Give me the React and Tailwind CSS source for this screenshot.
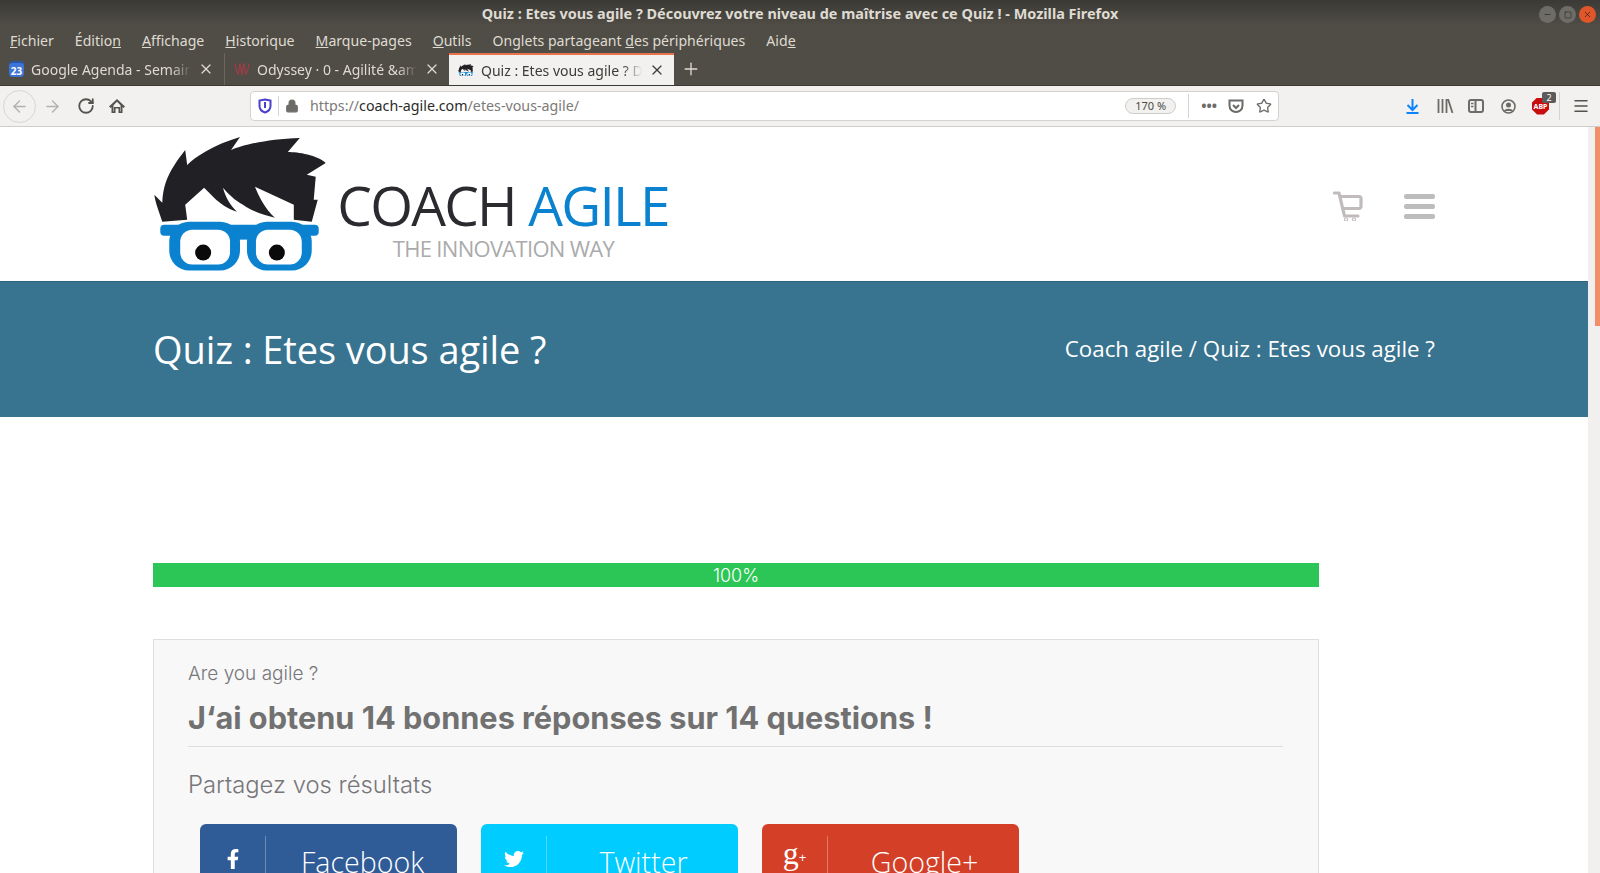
import React from 'react';
import { ArrowLeft, ArrowRight, RotateCw, Lock, Star, Plus, X, Minus, Square, Menu } from 'lucide-react';
import { FaFacebookF, FaTwitter } from 'react-icons/fa';

const menus = [
  ['F', 'ichier'],
  ['', 'Éditio', 'n'],
  ['A', 'ffichage'],
  ['H', 'istorique'],
  ['M', 'arque-pages'],
  ['O', 'utils'],
  ['', 'Onglets partageant ', 'd', 'es périphériques'],
  ['', 'Aid', 'e'],
];

const MenuLabel = ({ parts }) => {
  if (parts[0]) {
    return <span><u>{parts[0]}</u>{parts[1]}</span>;
  }
  return <span>{parts[1]}<u>{parts[2]}</u>{parts[3]}</span>;
};

const CalendarIcon = () => (
  <div className="w-[15px] h-[16px] bg-[#3d74d8] rounded-sm flex items-end justify-center text-white text-[10px] leading-[12px] font-bold shrink-0 border-t-2 border-[#2a56a8]">
    23
  </div>
);

const OdysseyIcon = () => (
  <svg width="16" height="14" viewBox="0 0 16 14" fill="none" stroke="#9c3d46" strokeWidth="1.3" className="shrink-0">
    <path d="M1 2c1 4 1 8 3 10 1-3 1-7 2-10 1 3 1 7 2 10 1-3 1-7 2-10 1 3 1 7 2 10 2-2 2-6 3-10" />
  </svg>
);

const LogoMark = ({ size = 176 }) => (
  <svg width={size} height={size * 0.77} viewBox="0 0 176 136" className="shrink-0">
    <path
      fill="#212024"
      d="M1 60 L9 68 C10 50 14 38 32 15 L34 30 C42 22 60 10 87 2 L78 15 C90 10 115 4 147 3 L135 17 C145 17 165 20 173 28 L154 40 L163 42 L161 65 L165 65 L159 87 L141 85 L141 70 L102 52 C106 62 112 74 122 83 C110 80 98 76 90 70 C82 66 74 58 70 53 C72 62 78 72 84 77 C74 74 66 68 61 63 L51 53 L32 70 L34 85 L9 87 C6 78 2 68 1 60 Z"
    />
    <rect x="7" y="90" width="159" height="11" rx="4" fill="#0a82cf" />
    <rect x="16" y="87" width="71" height="49" rx="20" fill="#0a82cf" />
    <rect x="94" y="87" width="65" height="49" rx="20" fill="#0a82cf" />
    <rect x="80" y="91" width="20" height="14" fill="#0a82cf" />
    <rect x="27" y="95" width="50" height="35" rx="12" fill="#fff" />
    <rect x="103" y="95" width="46" height="35" rx="12" fill="#fff" />
    <circle cx="50" cy="118" r="8" fill="#0a0a0a" />
    <circle cx="124" cy="118" r="8" fill="#0a0a0a" />
  </svg>
);

const CartIcon = () => (
  <svg width="30" height="30" viewBox="0 0 30 30" fill="none" stroke="#bfbcbb" strokeWidth="3.200" strokeLinecap="round" strokeLinejoin="round">
    <path d="M1.500 2H6l5.500 23H25" />
    <path d="M7 5.500h19c1.500 0 2 1 2 2v8c0 1-1 2-2 2H10" />
    <circle cx="13" cy="28.500" r="0.500" />
    <circle cx="21" cy="28.500" r="0.500" />
  </svg>
);

const GooglePlusGlyph = () => (
  <div className="flex items-start text-white font-['Liberation_Serif',serif] leading-none -mt-[12px]">
    <span className="text-[32px] leading-[32px]">g</span>
    <span className="text-[13px] leading-[12px] mt-[15px] font-['Liberation_Sans',sans-serif]">+</span>
  </div>
);

const ShareButton = ({ color, icon, label }) => (
  <div className={`w-[257px] h-[80px] rounded-t-md flex pt-3 ${color}`}>
    <div className="w-[66px] h-[68px] flex justify-center pt-[13px] text-white text-[20px] border-r border-white/30 shrink-0">
      {icon}
    </div>
    <div className="flex-1 text-center text-white text-[28.600px] leading-[52px] pl-[2px] font-['Open_Sans',sans-serif] font-light">
      {label}
    </div>
  </div>
);

export default function App() {
  return (
    <div className="h-[873px] w-[1600px] overflow-hidden flex flex-col font-['Noto_Sans',sans-serif]">
      {/* window chrome */}
      <div className="bg-gradient-to-b from-[#3b3a36] to-[#504d46] h-[26px] pt-[1px] shrink-0 flex items-center relative">
        <div className="flex-1 text-center text-[#dfdbd2] text-[14.450px] font-bold">
          Quiz : Etes vous agile ? Découvrez votre niveau de maîtrise avec ce Quiz ! - Mozilla Firefox
        </div>
        <div className="absolute right-[4px] top-[6px] flex gap-[3px]">
          <div className="w-[17px] h-[17px] rounded-full bg-[#6e6c66] flex items-center justify-center"><Minus size={9} color="#2f2e2b" strokeWidth={2} /></div>
          <div className="w-[17px] h-[17px] rounded-full bg-[#6e6c66] flex items-center justify-center"><Square size={8} color="#2f2e2b" strokeWidth={2} /></div>
          <div className="w-[17px] h-[17px] rounded-full bg-[#e0562b] flex items-center justify-center"><X size={9} color="#3b2016" strokeWidth={2} /></div>
        </div>
      </div>
      <div className="bg-[#504d46] h-[27px] pt-[2px] shrink-0 flex items-center gap-[21px] pl-[10px] text-[#dfdbd2] text-[14.100px]">
        {menus.map((m) => (
          <MenuLabel key={m.join('')} parts={m} />
        ))}
      </div>
      <div className="bg-[#504d46] h-[33px] shrink-0 flex items-stretch text-[14px] border-b border-[#3a3934]">
        <div className="w-[225px] flex items-center pl-[9px] pr-[10px] gap-[7px] text-[#dfdbd2] border-r border-[#6a675f]">
          <CalendarIcon />
          <span className="flex-1 overflow-hidden whitespace-nowrap [mask-image:linear-gradient(to_right,black_88%,transparent)]">Google Agenda - Semaine</span>
          <X size={16} strokeWidth={1.8} className="shrink-0" />
        </div>
        <div className="w-[224px] flex items-center pl-[9px] pr-[9px] gap-[7px] text-[#dfdbd2]">
          <OdysseyIcon />
          <span className="flex-1 overflow-hidden whitespace-nowrap [mask-image:linear-gradient(to_right,black_88%,transparent)]">Odyssey · 0 - Agilité &amp;amp</span>
          <X size={16} strokeWidth={1.8} className="shrink-0" />
        </div>
        <div className="w-[225px] flex items-center pl-[9px] pr-[9px] gap-[7px] bg-[#f2f1ef] text-[#3c3b37] border-t-2 border-[#e8734a]">
          <LogoMark size={16} />
          <span className="flex-1 overflow-hidden whitespace-nowrap [mask-image:linear-gradient(to_right,black_88%,transparent)]">Quiz : Etes vous agile ? Dé</span>
          <X size={16} strokeWidth={1.8} className="shrink-0" />
        </div>
        <div className="flex items-center pl-[7px]">
          <Plus size={20} color="#dfdbd2" strokeWidth={1.6} />
        </div>
      </div>
      {/* nav bar */}
      <div className="bg-[#f2f1ef] h-[41px] shrink-0 flex items-center border-b border-[#cfcdca]">
        <div className="flex items-center w-[250px] pl-[3px]">
          <div className="w-[33px] h-[33px] rounded-full border border-[#d8d6d3] flex items-center justify-center">
            <ArrowLeft size={19} color="#b3b1ae" strokeWidth={1.8} />
          </div>
          <ArrowRight size={19} color="#b3b1ae" strokeWidth={1.8} className="ml-[7px]" />
          <RotateCw size={18} color="#55534f" strokeWidth={2.4} className="ml-[15px]" />
          <svg width="16" height="16" viewBox="0 0 16 16" fill="#55534f" className="ml-[14px]">
            <path d="M8 1 L16 8.500 L14.500 10 L13.500 9 V15 H9.500 V10.500 H6.500 V15 H2.500 V9 L1.500 10 L0 8.500 Z M8 3.800 L4.500 7.200 V13.500 H5 V9 H11 V13.500 H11.500 V7.200 Z" fillRule="evenodd" />
          </svg>
        </div>
        <div className="w-[1029px] h-[30px] bg-white rounded-[4px] border border-[#d5d3d0] flex items-center text-[14.250px] pl-[7px] pr-[6px]">
          <svg width="14" height="16" viewBox="0 0 14 16" fill="none" stroke="#4a3fd0" strokeWidth="2"><path d="M7 1.500 L12.500 2.500 V8 C12.500 11 10 13.500 7 14.500 C4 13.500 1.500 11 1.500 8 V2.500 Z" /><path d="M7 4v6" /></svg>
          <div className="w-px h-[20px] bg-[#d5d3d0] ml-[6px]" />
          <Lock size={14} color="#6d6b68" fill="#6d6b68" className="ml-[6px]" />
          <span className="ml-[11px] text-[#7c7a77] flex-1">
            https://<span className="text-[#2c2b29]">coach-agile.com</span>/etes-vous-agile/
          </span>
          <div className="w-[51px] h-[16px] rounded-full border border-[#cfcdca] bg-[#f2f1ef] text-[11px] leading-[14px] text-center text-[#4a4946]">170 %</div>
          <div className="w-px h-[24px] bg-[#d5d3d0] ml-[12px]" />
          <div className="text-[#6d6b68] text-[14px] font-bold ml-[12px] leading-none">•••</div>
          <svg width="16" height="15" viewBox="0 0 16 15" fill="none" stroke="#6d6b68" strokeWidth="2" className="ml-[11px]"><path d="M1.500 1.500h13v5c0 4-3 6.500-6.500 6.500S1.500 10.500 1.500 6.500z" /><path d="M5 6l3 3 3-3" /></svg>
          <Star size={16} color="#6d6b68" strokeWidth={2} className="ml-[12px]" />
        </div>
        <div className="flex-1 flex items-center pl-[127px]">
          <svg width="13" height="15" viewBox="0 0 13 15" fill="none" stroke="#0a84ff" strokeWidth="2"><path d="M6.500 0v10.500M1.500 6l5 5 5-5" /><path d="M0.500 14h12" /></svg>
          <svg width="17" height="14" viewBox="0 0 17 14" fill="none" stroke="#6d6b68" strokeWidth="1.800" className="ml-[18px]"><path d="M1.500 0v14M5.500 0v14M9.500 0v14M11 0l4.500 14" /></svg>
          <svg width="16" height="14" viewBox="0 0 16 14" fill="none" stroke="#6d6b68" strokeWidth="2" className="ml-[14px]"><rect x="1" y="1" width="14" height="12" rx="2" /><path d="M7.500 1v12" /><path d="M3 4.500h2.500M3 7.500h2.500" strokeWidth="1.300" /></svg>
          <svg width="15" height="15" viewBox="0 0 15 15" className="ml-[17px]"><circle cx="7.500" cy="7.500" r="6.500" fill="none" stroke="#6d6b68" strokeWidth="1.600" /><circle cx="7.500" cy="6" r="2.500" fill="#6d6b68" /><path d="M3 12c1-3 8-3 9 0z" fill="#6d6b68" /></svg>
          <div className="relative ml-[16px]">
            <div className="w-[17px] h-[17px] [clip-path:polygon(30%_0,70%_0,100%_30%,100%_70%,70%_100%,30%_100%,0_70%,0_30%)] bg-[#c70d0d] text-white text-[7px] font-bold leading-[17px] text-center">ABP</div>
            <div className="absolute -top-[6px] -right-[7px] w-[14px] h-[11px] rounded-[2px] bg-[#5b5b5b] text-white text-[9px] leading-[11px] text-center">2</div>
          </div>
          <div className="w-px h-[28px] bg-[#d5d3d0] ml-[10px]" />
          <Menu size={18} color="#55534f" strokeWidth={2} className="ml-[12px]" />
        </div>
      </div>

      {/* page */}
      <div className="flex-1 flex min-h-0">
        <div className="w-[1588px] bg-white font-['Open_Sans',sans-serif]">
          <div className="h-[154px] px-[153px] flex items-start justify-between">
            <div className="flex items-start pt-[8px]">
              <LogoMark />
              <div className="ml-[9px] pt-[40px] w-[330px] flex flex-col items-center">
                <div className="text-[55px] leading-[60px] tracking-[-1.800px] whitespace-nowrap text-[#2b2a2e]">
                  COACH <span className="text-[#0a82cf]">AGILE</span>
                </div>
                <div className="text-[22px] leading-[24px] tracking-[-0.7px] text-[#ababab] whitespace-nowrap mt-[1px] pl-[1px]">THE INNOVATION WAY</div>
              </div>
            </div>
            <div className="flex items-center pt-[64px] gap-[41px]">
              <CartIcon />
              <div className="w-[31px] flex flex-col gap-[5px]">
                <div className="h-[5px] rounded-[2px] bg-[#bdbdbd]" />
                <div className="h-[5px] rounded-[2px] bg-[#bdbdbd]" />
                <div className="h-[5px] rounded-[2px] bg-[#bdbdbd]" />
              </div>
            </div>
          </div>
          <div className="h-[136px] bg-[#38738f] border-t border-[#2f6480] px-[153px] flex items-center justify-between text-white">
            <div className="text-[38px] leading-none tracking-[-0.1px] pb-[2px]">Quiz : Etes vous agile ?</div>
            <div className="text-[22.300px] leading-none">Coach agile / Quiz : Etes vous agile ?</div>
          </div>
          <div className="ml-[153px] pt-[146px] w-[1166px]">
            <div className="h-[24px] bg-[#2cc656] text-white text-center text-[18px] leading-[26px] font-['Inter',sans-serif] font-light">100%</div>
            <div className="mt-[52px] border border-[#dedede] bg-[#f8f8f8] pl-[34px] pr-[35px] pt-[22px] h-[300px] font-['Inter',sans-serif]">
              <div className="text-[#77767a] text-[19px] leading-[24px] font-light">Are you agile ?</div>
              <div className="mt-[12px] pb-[8px] border-b border-[#dedede] text-[#717171] text-[30.700px] leading-[40px] font-bold">J‘ai obtenu 14 bonnes réponses sur 14 questions !</div>
              <div className="mt-[22px] text-[#77767a] text-[23.800px] leading-[32px] font-light">Partagez vos résultats</div>
              <div className="mt-[23px] ml-[12px] flex gap-[24px]">
                <ShareButton color="bg-[#2f5b97]" icon={<FaFacebookF />} label="Facebook" />
                <ShareButton color="bg-[#00ccff]" icon={<FaTwitter />} label="Twitter" />
                <ShareButton color="bg-[#d33f27]" icon={<GooglePlusGlyph />} label="Google+" />
              </div>
            </div>
          </div>
        </div>
        <div className="w-[12px] bg-[#f2f0ee] flex justify-end">
          <div className="w-[5px] h-[199px] bg-[#f28f68]" />
        </div>
      </div>
    </div>
  );
}
